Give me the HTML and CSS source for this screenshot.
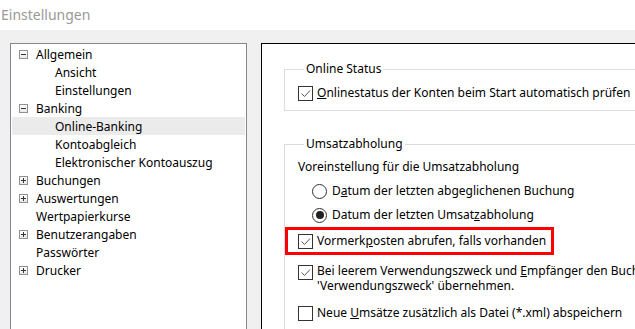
FILE: index.html
```html
<!DOCTYPE html>
<html lang="de">
<head>
    <meta charset="UTF-8">
    <title>Einstellungen</title>
    <link rel="stylesheet" href="styles.css">
</head>
<body>
    <div class="titlebar">Einstellungen</div>
    <div class="content">
        <!-- Navigationsbaum -->
        <ul class="tree">
            <li class="node"><span class="toggle minus"></span>Allgemein</li>
            <li class="leaf">Ansicht</li>
            <li class="leaf">Einstellungen</li>
            <li class="node"><span class="toggle minus"></span>Banking</li>
            <li class="leaf selected">Online-Banking</li>
            <li class="leaf">Kontoabgleich</li>
            <li class="leaf">Elektronischer Kontoauszug</li>
            <li class="node"><span class="toggle plus"></span>Buchungen</li>
            <li class="node"><span class="toggle plus"></span>Auswertungen</li>
            <li class="node plain">Wertpapierkurse</li>
            <li class="node"><span class="toggle plus"></span>Benutzerangaben</li>
            <li class="node plain">Passwörter</li>
            <li class="node"><span class="toggle plus"></span>Drucker</li>
        </ul>

        <!-- Seite Online-Banking -->
        <div class="page">
            <fieldset class="group group-status">
                <legend>Online Status</legend>
                <label class="option">
                    <svg class="cb" width="15" height="15" viewBox="0 0 15 15"><rect x="0.5" y="0.5" width="14" height="14" fill="#fff" stroke="#333"/><path d="M3.5 7.5l3 3 5.5-6" fill="none" stroke="#555"/></svg>
                    <span><u>O</u>nlinestatus der Konten beim Start automatisch prüfen</span>
                </label>
            </fieldset>

            <fieldset class="group group-umsatz">
                <legend>Umsatzabholung</legend>
                <div class="caption">Voreinstellung für die Umsatzabholung</div>
                <label class="option radio-row">
                    <span class="radio"></span>
                    <span>D<u>a</u>tum der letzten abgeglichenen Buchung</span>
                </label>
                <label class="option radio-row">
                    <span class="radio checked"></span>
                    <span>Datum der letzten Umsat<u>z</u>abholung</span>
                </label>
                <div class="marked">
                    <label class="option">
                        <svg class="cb" width="15" height="15" viewBox="0 0 15 15"><rect x="0.5" y="0.5" width="14" height="14" fill="#fff" stroke="#333"/><path d="M3.5 7.5l3 3 5.5-6" fill="none" stroke="#555"/></svg>
                        <span>Vormerk<u>p</u>osten abrufen, falls vorhanden</span>
                    </label>
                </div>
                <label class="option multi">
                    <svg class="cb" width="15" height="15" viewBox="0 0 15 15"><rect x="0.5" y="0.5" width="14" height="14" fill="#fff" stroke="#333"/><path d="M3.5 7.5l3 3 5.5-6" fill="none" stroke="#555"/></svg>
                    <span>Bei leerem Verwendungszweck und <u>E</u>mpfänger den Buchungstext in<br>'Verwendungszweck' übernehmen.</span>
                </label>
                <label class="option">
                    <svg class="cb" width="15" height="15" viewBox="0 0 15 15"><rect x="0.5" y="0.5" width="14" height="14" fill="#fff" stroke="#333"/></svg>
                    <span>Neue <u>U</u>msätze zusätzlich als Datei (*.xml) abspeichern</span>
                </label>
            </fieldset>
        </div>
    </div>
</body>
</html>
```

FILE: styles.css
```css
body {
    margin: 0;
    width: 635px;
    height: 329px;
    overflow: hidden;
    background-color: #f0f0f0;
    font-family: "Noto Sans", sans-serif;
    font-size: 12px;
    color: #000;
}
.titlebar {
    background-color: #fff;
    height: 30px;
    padding-left: 1px;
    font-size: 14px;
    line-height: 29px;
    color: #999;
}
.content {
    display: flex;
    gap: 14px;
    padding: 13px 0 0 10px;
}
/* Baum links */
.tree {
    list-style: none;
    margin: 0;
    padding: 1px;
    width: 233px;
    height: 300px;
    flex-shrink: 0;
    background-color: #fff;
    border: 1px solid #828790;
}
.tree li {
    display: flex;
    align-items: center;
    height: 18px;
    white-space: nowrap;
}
.tree .node {
    padding-left: 7px;
}
.tree .node.plain {
    padding-left: 24px;
}
.tree .leaf {
    padding-left: 43px;
}
.tree .selected {
    background-color: #ebebeb;
}
.toggle {
    position: relative;
    width: 7px;
    height: 7px;
    margin-right: 8px;
    border: 1px solid #919191;
    background: linear-gradient(#fff, #e8e8e8);
}
.toggle::before,
.toggle.plus::after {
    content: "";
    position: absolute;
    background-color: #333;
}
.toggle::before {
    left: 1px;
    top: 3px;
    width: 5px;
    height: 1px;
}
.toggle.plus::after {
    left: 3px;
    top: 1px;
    width: 1px;
    height: 5px;
}
/* Seite rechts */
.page {
    width: 420px;
    height: 300px;
    flex-shrink: 0;
    background-color: #fff;
    border: 1px solid #000;
    padding: 17px 0 0 22px;
}
.group {
    margin: 0;
    min-width: 0;
    border: 1px solid #dcdcdc;
    padding: 0 0 0 13px;
}
.group legend {
    margin-left: 6px;
    padding: 0 2px;
    line-height: 16px;
}
.group-status {
    padding-top: 7px;
    padding-bottom: 8px;
}
.group-umsatz {
    margin-top: 25px;
    padding-top: 6px;
    height: 200px;
}
.caption {
    line-height: 18px;
}
.option {
    display: flex;
    align-items: center;
    gap: 4px;
    line-height: 18px;
    white-space: nowrap;
}
.cb {
    flex-shrink: 0;
}
.radio-row {
    margin-top: 6px;
    padding-left: 14px;
    gap: 5px;
}
.radio {
    width: 13px;
    height: 13px;
    border: 1px solid #333;
    border-radius: 50%;
    display: flex;
    align-items: center;
    justify-content: center;
}
.radio.checked::after {
    content: "";
    width: 8px;
    height: 8px;
    border-radius: 50%;
    background-color: #222;
}
.marked {
    width: 253px;
    margin: 3px 0 0 -13px;
    padding: 2px 0 2px 10px;
    border: 3px solid #f00;
}
.option.multi {
    align-items: flex-start;
    margin-top: 8px;
    line-height: 15px;
}
.option.multi .cb {
    margin-top: 2px;
}
.option.multi + .option {
    margin-top: 11px;
}
```
